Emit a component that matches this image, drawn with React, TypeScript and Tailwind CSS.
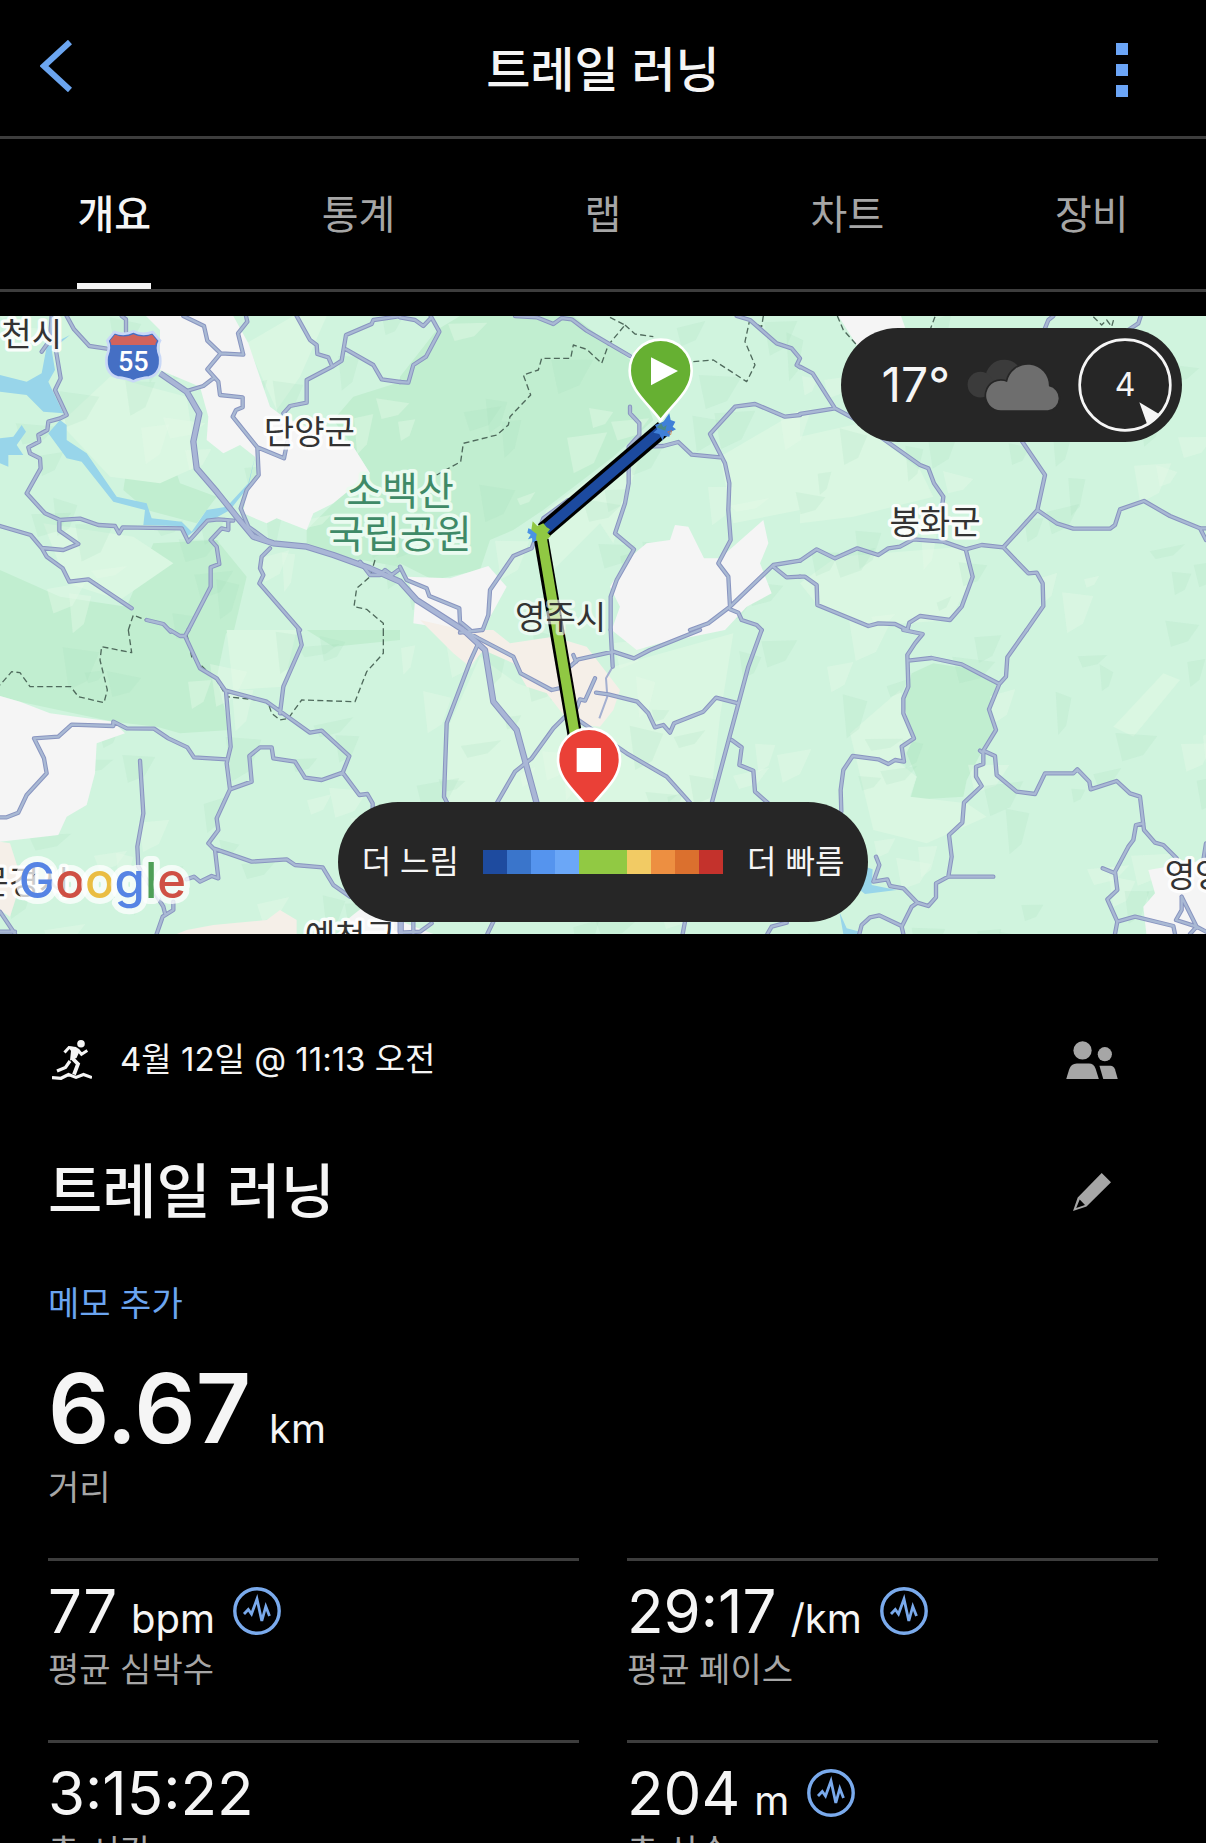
import React, { useState } from 'react';

type Shape = { x: number; y: number; d: string };

const TABS = ['개요', '통계', '랩', '차트', '장비'];

const PACE_COLORS = [
  'bg-[#1e4b9f]',
  'bg-[#3a75cb]',
  'bg-[#5594ee]',
  'bg-[#6ba7f7]',
  'bg-[#91c943]',
  'bg-[#91c943]',
  'bg-[#f2cb64]',
  'bg-[#ed8f41]',
  'bg-[#db702e]',
  'bg-[#c4322c]',
];

const METRICS = [
  { value: '77', unit: 'bpm', label: '평균 심박수', chart: true },
  { value: '29:17', unit: '/km', label: '평균 페이스', chart: true },
  { value: '3:15:22', unit: '', label: '총 시간', chart: false },
  { value: '204', unit: 'm', label: '총 상승', chart: true },
];

// Map layers. Every shape is stored with the origin of its tile.
const FOREST: Shape[] = [
  { x: 0, y: -18, d: 'M0 780L180 860L380 890L460 700L650 690L740 800L700 970H0z' },
  { x: 0, y: 942, d: 'M0 0H680L650 145L690 300L540 310L470 290L340 275L60 215L0 198z' },
  { x: 0, y: -18, d: 'M920 660L1040 540L1110 490L1060 410L1000 330L1060 260L1200 216V770L1000 735L920 700z' },
  { x: 1200, y: -18, d: 'M0 200L110 60L180 18H520L690 150L760 330L640 440L430 600L340 660L270 690L240 780L100 810L0 760z' },
  { x: 2400, y: 942, d: 'M335 130L400 100L500 115L590 165L567 238L588 300L545 365L500 450L490 500L330 510L350 440L320 370L340 325L305 240z' },
  { x: 0, y: -18, d: 'M390 410L500 400L540 520L650 560L590 640L440 600L370 540z' },
  { x: 0, y: 942, d: 'M920 0H1200V30L1000 50z' },
];

const MEADOW: Shape[] = [
  { x: 0, y: -18, d: 'M180 340L330 200L560 260L590 470L480 520L330 500z' },
  { x: 0, y: -18, d: 'M130 640L400 680L520 760L360 870L200 820z' },
  { x: 0, y: 942, d: 'M680 0H890L850 170L700 180z' },
  { x: 0, y: -18, d: 'M740 100L880 18H980L900 200L830 300z' },
  { x: 1200, y: 942, d: 'M350 160L560 230L640 110L1000 10L960 260L930 520H130L150 280L240 80z' },
  { x: 1200, y: -18, d: 'M440 600L740 380L680 560L640 700L600 640L460 780L400 720z' },
  { x: 1200, y: -18, d: 'M960 440L1200 300V600L1000 640z' },
  { x: 2400, y: -18, d: 'M0 820L110 740L490 710L518 800L450 930L205 948L52 885z' },
  { x: 2400, y: -18, d: 'M0 380L180 340L360 480L400 560L160 620L0 640z' },
  { x: 2400, y: 942, d: 'M150 310L300 180L340 330L300 400L350 440L330 500L500 520L560 560L380 640L220 600z' },
  { x: 2400, y: 942, d: 'M940 290L1090 130L1140 150L1000 320z' },
];

const OPEN: Shape[] = [
  { x: 0, y: -18, d: 'M420 0H690L745 100L810 290L850 320L1060 410L1110 490L1000 580L940 610L920 660L830 625L800 640L730 610L740 540L780 500L765 440L720 405L670 430L620 390L625 320L600 230L480 180V60z' },
  { x: 0, y: 942, d: 'M0 198L60 215L150 250L340 275L375 310L290 340L285 430L260 525L200 560L175 615L0 635z' },
  { x: 1200, y: -18, d: 'M630 830L680 750L740 700L810 690L825 645L865 650L912 745H960L1090 630L1105 700L1080 760L1115 850L1040 890L975 960L780 1000L710 1020L635 960L660 890z' },
  { x: 1200, y: -18, d: 'M20 800L150 805L265 768L320 830L260 940L248 970L200 965L40 940L45 870z' },
  { x: 2400, y: -18, d: 'M110 10H300L320 65L170 105z' },
  { x: 2400, y: 942, d: 'M1218 690L1045 720L1065 790L1030 830L1040 920H1218z' },
  { x: 0, y: 942, d: 'M1040 870L1090 830L1300 912V930H1060z' },
];

const TOWN: Shape[] = [
  { x: 1200, y: 942, d: 'M60 -30L190 0L280 0L330 40L460 20L560 50L660 180L640 240L600 290L510 280L440 190L380 170L340 100L250 60L210 110L160 70z' },
  { x: 0, y: 942, d: 'M0 635L30 640L65 750L30 860L0 840z' },
  { x: 0, y: 942, d: 'M510 920L560 900L640 885L800 870L840 840L890 870V920z' },
];

const WATER: Shape[] = [
  { x: 0, y: -18, d: 'M0 195L80 215L125 190L140 110L210 75L155 120L165 180L145 215L190 310L130 305L80 255L0 245z' },
  { x: 0, y: -18, d: 'M145 370L180 330L200 345V390L260 430L350 560L440 580L455 625L545 635L575 665L620 600L680 590L745 520L765 440L745 530L690 600L600 650L560 680L530 648L430 645L435 600L340 575L245 455L200 445z' },
  { x: 0, y: -18, d: 'M0 385L40 380L65 345L78 365L50 405L70 435L25 435V470L0 460z' },
  { x: 2400, y: 942, d: 'M200 712L218 718L215 765L290 780L195 792L180 780z' },
  { x: 2400, y: 942, d: 'M118 845L140 895L180 905V912H130z' },
];

const ROADS: Shape[] = [
  {
    x: 0,
    y: -18,
    d: 'M200 18L222 58L268 108L320 116M365 18L378 28V65M560 243L610 228L640 205M550 18L612 48L622 92L662 130L622 178L655 215L660 255L728 262V292L708 300L698 320L772 412L852 445L862 395M662 130L730 134L714 70L742 35L738 18M772 412L776 495L740 540L722 595L745 650L800 690M890 18L930 90L950 105L952 132L985 142L995 165M850 310L870 288L920 278V210L1000 168L1025 152L1038 75L1115 42L1120 30L1200 18M1038 118L1120 165L1145 208L1200 216M155 18L150 90L125 125M150 90L165 105L182 205L165 240L200 315L180 325L145 335L142 360L115 375L118 395L85 412L90 430L120 445L122 475L80 550L135 610L180 630L240 626L295 645L345 648L357 670L368 652L545 655L565 695L622 632L655 628L700 632M178 630V662L235 702L190 720L125 714L92 675L0 648M125 714L140 740L188 775L208 815L265 808L395 895M440 930L490 942L512 965M685 632V660L665 655L632 690L650 710L658 762L632 772V830L565 960M810 715L785 740L780 775L790 795L778 820L900 960M1080 755L1110 795L1140 795L1155 780L1175 795L1195 780',
  },
  {
    x: 1200,
    y: -18,
    d: 'M0 22L45 30L70 48L92 25M92 18L118 65L78 140L40 165L25 218L0 216M345 18L410 22L460 42L485 24L515 28L560 62L690 138M1010 18L1050 30L1130 100L1175 115L1200 145L1190 165L1200 172M690 290V310L718 340V375L686 410V520L675 580L645 670L702 718L650 810L632 860V960M740 410L790 408L835 396L875 434L960 442M1200 315L1155 320L1065 282L1005 290L930 372L975 460L988 520L985 600L992 690L955 760L985 800L990 890M870 960L925 940L990 890L1120 765L1200 752M1120 770L1160 802L1200 800M990 898L1015 908L1025 930L1070 945L1085 960M0 770L20 810L80 835L88 858L178 895L180 935L210 960M505 570L430 625L395 715L340 738L270 840L265 915L248 960',
  },
  {
    x: 2400,
    y: -18,
    d: 'M0 170L38 190L105 295L0 312M105 295L170 330L360 465L385 475L402 520L430 560L425 600M660 385L735 495L712 600L610 712L545 705L497 718L430 695L340 688L300 710L265 715L235 735L172 715L105 745L50 718L0 752M712 600L770 640L820 656H930L945 645L960 598L1032 573L1110 618L1200 655H1218M1200 655L1218 690M497 718L518 800L485 890L450 930L360 918L328 938L322 960M610 712L685 790L710 788L728 820L730 888L680 960M0 800L15 800L50 825L52 885L205 948L235 940L285 942L322 960M735 55L745 30L760 18M985 60L1015 40L1022 18',
  },
  {
    x: 0,
    y: 942,
    d: 'M510 0L540 18H555L565 0M555 18L600 115L650 145L678 185L692 350L680 400L690 478L650 565L655 600L625 640L645 660L655 745L635 738L600 755L582 740L560 748M678 182L800 215L930 308L965 302L1048 378L1028 428L965 450L915 443L885 395L820 385L815 352L780 352L748 378L755 455L690 478M1028 428L1078 495L1102 492L1118 520V540M895 0L905 45L850 170L840 250M680 388L582 382L562 352L505 325L462 296L380 295L340 275V288L215 284L175 320L102 325L132 385L140 430L80 495L55 548L20 562H0M420 392L430 550L412 650L415 710L490 830L495 850M520 815V840L488 860L470 912M640 655L755 695L860 688L885 705L968 712L1000 765L1050 800M0 845L45 912M0 905H45',
  },
  {
    x: 1200,
    y: 942,
    d: 'M190 0L235 25L340 80L362 130L455 180L500 170M235 40L210 95L140 280L132 500L142 520M180 8L245 0M510 110L535 88L640 65L702 85L750 60L900 0M520 75L528 95M632 0L638 110M588 188L625 193L712 215L745 250L765 292L790 285L810 308L822 280L910 245L948 203L1015 220M1085 0L1045 110L935 520M995 330L1025 352L1018 405L1060 422L1065 485L1105 520M585 145L555 212L540 208L530 235M500 255L460 295L395 385L345 425L290 520M535 270L680 370L800 440L870 518M40 875V910M95 880L60 905L0 908M280 875L262 912M855 875L848 912M1160 878L1115 890L1102 912',
  },
  {
    x: 2400,
    y: 942,
    d: 'M310 0L368 12L345 40L322 75L325 170L310 205V250L342 325L305 350L312 395L285 390L265 402L235 388L158 378L130 420L122 480L124 545M325 92L395 84L485 103L598 162M680 0L622 82L618 140L598 162L567 238L588 300L550 362L585 378L590 435L650 485L705 492L735 430H820L832 418L868 455L872 478L950 453L990 490L1020 500L1032 600L1065 638L1090 645L1130 685M540 362L550 370V402L528 410V440L545 468L492 518L487 578L447 615L455 680L445 740L408 760V802L385 828L352 818L310 775L270 768L262 748L220 755L238 705L228 680M445 740H580M352 818L335 830L305 890L310 912M305 888L238 856L210 862L185 885L178 912M1030 580L1008 585L1000 630L985 650L945 725L952 780L922 808L952 875L945 912M945 730L908 715M952 875L1005 860L1120 888L1125 912M1145 800V840L1128 870L1190 890L1145 800M1190 890L1218 905M1190 890L1170 912M1218 640L1210 690',
  },
];

const HIGHWAYS: Shape[] = [
  { x: 0, y: -18, d: 'M480 190L560 245L598 310L580 395L590 475L650 545L710 620L760 680L820 700L920 710L1000 735L1110 775L1200 815L1250 870L1390 960' },
  { x: 1200, y: 942, d: 'M190 0L255 60L280 215L350 300L410 520' },
  { x: 1200, y: 942, d: 'M2 870V915' },
];

const BORDERS: Shape[] = [
  { x: 0, y: -18, d: 'M385 960L400 915L450 935M1125 750L1110 800L1070 835L1062 890L1100 898L1150 940V960' },
  { x: 0, y: 942, d: 'M385 0L395 68L305 50L300 90L322 180L312 218L235 200L212 170H90L60 128L35 125L0 165M1150 0V70L1100 125L1065 215L905 210L865 265L840 270L815 250L805 220M560 10L575 80L650 150L680 200L800 213' },
  { x: 1200, y: -18, d: 'M630 22L675 45L625 105L605 160L560 118L520 105L512 145H425L415 180L370 195L392 255L330 320L325 345L290 375L190 400L182 455L110 495M675 45L705 72L760 80M880 155L940 150L1040 215L1065 165L1035 95L1048 35M1090 18L1085 50L1050 35' },
  { x: 2400, y: -18, d: 'M112 18L130 60L170 105M405 20L390 60M880 20L905 45L920 30L935 50L942 25' },
];

// Small low-contrast facets that give the terrain its relief.
const FACETS = Array.from({ length: 230 }, (_, i) => {
  const x = (i * 733) % 3618;
  const y = (i * 419 + ((i * i * 37) % 211)) % 1854;
  const w = 40 + ((i * 53) % 90);
  const h = 25 + ((i * 31) % 70);
  return `M${x} ${y}l${w} ${((i * 17) % 50) - 25}l${-w / 3} ${h}l${-w / 2} ${h / 3}z`;
});

const Layer: React.FC<{ shapes: Shape[] }> = ({ shapes }) => (
  <>
    {shapes.map((s, i) => (
      <path key={i} transform={`translate(${s.x} ${s.y})`} d={s.d} />
    ))}
  </>
);

const TrailMap: React.FC = () => (
  <svg
    viewBox="0 0 3618 1854"
    preserveAspectRatio="xMidYMid slice"
    className="block h-full w-full font-['Roboto','Noto_Sans_CJK_KR',sans-serif]"
    role="img"
    aria-label="지도"
  >
    <rect width="3618" height="1854" fill="#d0f4de" />
    <g fill="#c1eed0"><Layer shapes={FOREST} /></g>
    <g fill="#daf7e2"><Layer shapes={MEADOW} /></g>
    <g>
      {FACETS.map((d, i) => (
        <path key={i} d={d} fill={i % 3 === 0 ? '#e6fbe9' : '#9fd9b6'} opacity={i % 3 === 0 ? 0.4 : 0.17} />
      ))}
    </g>
    <g fill="#f5f5f5"><Layer shapes={OPEN} /></g>
    <g fill="#f5efe8"><Layer shapes={TOWN} /></g>
    <g fill="#98d5ea"><Layer shapes={WATER} /></g>

    <g fill="none" strokeLinejoin="round">
      <g stroke="#4f6a5c" strokeWidth="4" strokeDasharray="18 10"><Layer shapes={BORDERS} /></g>
      <path d="M1838 1052L1818 1087L1822 1142L1798 1207" stroke="#a3afd0" strokeWidth="6" />
      <g stroke="#8995c0" strokeWidth="13" strokeLinecap="round"><Layer shapes={ROADS} /></g>
      <g stroke="#8995c0" strokeWidth="19"><Layer shapes={HIGHWAYS} /></g>
      <g stroke="#a9b9d4" strokeWidth="7" strokeLinecap="round"><Layer shapes={ROADS} /></g>
      <g stroke="#a9b6d6" strokeWidth="13"><Layer shapes={HIGHWAYS} /></g>
    </g>

    {/* Route */}
    <g transform="translate(1200 -18)" fill="none">
      <path d="M790 355L430 662" stroke="#000" strokeWidth="50" />
      <path d="M424 690L534 1330" stroke="#000" strokeWidth="44" />
      <path d="M800 346L425 668" stroke="#1c4a9f" strokeWidth="30" />
      <path d="M765 345L790 335L808 310L812 330L826 335L818 350L828 358L812 366L808 380L792 378L788 392L778 372L760 368L772 358z" fill="#3f80d8" />
      <path d="M770 352L784 340L790 352L800 345L796 362L784 358z" fill="#4a8a8a" />
      <path d="M803 366L815 362L812 374z" stroke="#d0703c" strokeWidth="2" />
      <path d="M385 655L398 660L405 650L420 665L410 690L398 698L396 684L384 688L392 674L382 668z" fill="#4a93e4" />
      <path d="M424 676L534 1330" stroke="#90c843" strokeWidth="30" />
      <path d="M398 634L412 648L430 640L440 652L450 658L442 668L452 678L440 690H408L410 672L394 660z" fill="#90c843" />
    </g>

    {/* Interstate shield */}
    <g transform="translate(0 -18)">
      <path d="M343 66Q372 78 400 64Q428 78 458 66L480 92Q468 112 480 140Q486 190 448 202Q420 204 400 214Q380 204 352 202Q314 190 320 140Q332 112 322 92z" fill="#456fc4" stroke="#c9d8f7" strokeWidth="8" />
      <path d="M345 74Q374 86 400 73Q427 86 456 74L471 92Q466 98 466 105H334Q334 98 330 92z" fill="#d2635c" />
      <text x="400" y="183" textAnchor="middle" fontSize="81" fontWeight="500" fill="#fff">55</text>
    </g>

    {/* Place names */}
    <g fontSize="99" fill="#333" stroke="#fff" strokeWidth="20" strokeLinejoin="round" paintOrder="stroke" strokeOpacity="0.9">
      <text x="95" y="90" textAnchor="middle">천시</text>
      <text x="928" y="383" textAnchor="middle">단양군</text>
      <text x="2805" y="654" textAnchor="middle">봉화군</text>
      <text x="1682" y="938" textAnchor="middle" strokeOpacity="0.6">영주시</text>
      <text x="3494" y="1712">영양군</text>
      <text x="914" y="1896">예천군</text>
      <text x="-65" y="1735">문경시</text>
    </g>
    <g fontSize="117" fill="#3f8a67" stroke="#eafbf0" strokeWidth="22" strokeLinejoin="round" paintOrder="stroke" textAnchor="middle">
      <text x="1200" y="568">소백산</text>
      <text x="1200" y="696">국립공원</text>
    </g>

    <text
      x="56"
      y="1746"
      className="font-['Inter',sans-serif]"
      fontSize="147"
      fontWeight="500"
      stroke="#fff"
      strokeWidth="36"
      strokeLinejoin="round"
      strokeOpacity="0.75"
      paintOrder="stroke"
    >
      <tspan fill="#5684e4">G</tspan>
      <tspan fill="#cf5044">o</tspan>
      <tspan fill="#eabd42">o</tspan>
      <tspan fill="#5684e4">g</tspan>
      <tspan fill="#4f9f57">l</tspan>
      <tspan fill="#cf5044">e</tspan>
    </text>

    {/* Start and finish pins */}
    <g transform="translate(1982 -18)" stroke="#fff" strokeWidth="8">
      <path d="M0 89C-52 89 -93 130 -93 182C-93 240 -42 276 0 331C42 276 93 240 93 182C93 130 52 89 0 89z" fill="#66b032" />
      <path d="M-29 142V226L52 183z" fill="#fff" stroke="none" />
    </g>
    <g transform="translate(1767 1149)" stroke="#fff" strokeWidth="8">
      <path d="M0 89C-52 89 -93 130 -93 182C-93 240 -42 276 0 331C42 276 93 240 93 182C93 130 52 89 0 89z" fill="#ea4037" />
      <rect x="-37" y="147" width="73" height="72" fill="#fff" stroke="none" />
    </g>
  </svg>
);

const CloudIcon: React.FC = () => (
  <svg viewBox="500 146 284 158" className="h-[52px] w-[94px]" aria-hidden="true">
    <g fill="#3b3b3b">
      <circle cx="612" cy="205" r="57" />
      <circle cx="540" cy="224" r="39" />
    </g>
    <path
      d="M603 302A45 45 0 1 1 621 216A64 64 0 0 1 748 229A37 37 0 0 1 745 302z"
      fill="#6e6e6e"
      stroke="#262626"
      strokeWidth="10"
      paintOrder="stroke"
    />
  </svg>
);

const RunnerIcon: React.FC = () => (
  <svg viewBox="0 0 40 40" className="h-10 w-10" fill="none" stroke="#f5f5f5" aria-hidden="true">
    <circle cx="29" cy="3.8" r="3.8" fill="#f5f5f5" stroke="none" />
    <path d="M16 6.2L25 7.5L28 10.5L24.5 18L18 20.5L19 11z" fill="#f5f5f5" stroke="none" />
    <path d="M12.5 12.5L17 7.5L24 8.6" strokeWidth="3" />
    <path d="M25.5 9.5L29.5 14.2L35.3 10.6" strokeWidth="3" />
    <path d="M20 18L26 24L22 34.5" strokeWidth="3.8" />
    <path d="M18 21L13.5 27.5L5 31" strokeWidth="3.2" />
    <path d="M0 37.6L9 38.3L16.5 34.6L24 37.4L31.5 34.4L40 37.6" strokeWidth="3.2" />
  </svg>
);

const PeopleIcon: React.FC = () => (
  <svg viewBox="110 125 154 115" className="w-[52px]" fill="#a6a6a6" aria-hidden="true">
    <circle cx="159" cy="153" r="27" />
    <circle cx="225" cy="164" r="21" />
    <path d="M110 240L119 210Q125 192 142 192H178Q192 192 198 208L208 240z" />
    <path d="M209 198H242Q251 198 255 209L264 240H221z" />
  </svg>
);

const PencilIcon: React.FC = () => (
  <svg viewBox="0 0 38 38" className="h-[38px] w-[38px]" fill="#a6a6a6" aria-hidden="true">
    <path d="M28.7 0L38 9.3L13.5 33.5L0 38L4.7 24.5zM6.7 26.5L3.2 35L12 32z" fillRule="evenodd" />
  </svg>
);

const ChartIcon: React.FC = () => (
  <svg viewBox="0 0 48 48" className="h-12 w-12" fill="none" stroke="#7aaaec" aria-hidden="true">
    <circle cx="24" cy="24" r="22.2" strokeWidth="3.4" />
    <path d="M11 27L15.3 22.5L18.5 27L24 12L28.8 34L32.8 19.5L36.5 29" strokeWidth="2.8" />
  </svg>
);

export default function App() {
  const [active, setActive] = useState('개요');

  return (
    <div
      lang="ko"
      className="h-screen overflow-y-auto bg-black font-['Inter','Noto_Sans_CJK_KR',sans-serif] text-[#f5f5f5] [scrollbar-width:none]"
    >
      {/* Header */}
      <header className="grid h-[139px] grid-cols-[1fr_auto_1fr] items-center border-b-[3px] border-[#3d3d3d] pt-1">
        <button type="button" aria-label="뒤로" className="justify-self-start pb-2 pl-10">
          <svg viewBox="0 0 32 52" className="h-[52px] w-8" fill="none" stroke="#6ba5f0" strokeWidth="6">
            <path d="M30 2L4 26L30 50" />
          </svg>
        </button>
        <h1 className="text-5xl font-medium">트레일 러닝</h1>
        <button type="button" aria-label="더 보기" className="mr-[78px] flex flex-col gap-[9px] justify-self-end">
          <span className="h-3 w-3 bg-[#6ba5f7]" />
          <span className="h-3 w-3 bg-[#6ba5f7]" />
          <span className="h-3 w-3 bg-[#6ba5f7]" />
        </button>
      </header>

      {/* Tabs */}
      <nav className="overflow-hidden border-b-[3px] border-[#3d3d3d]">
        <div role="tablist" className="-mx-2 grid h-[150px] grid-cols-5 justify-items-center">
          {TABS.map((tab) => (
            <button
              key={tab}
              type="button"
              role="tab"
              aria-selected={active === tab}
              onClick={() => setActive(tab)}
              className={
                active === tab
                  ? 'border-b-[6px] border-[#f5f5f5] pt-2 text-[40px] font-medium'
                  : 'border-b-[6px] border-transparent pt-2 text-[40px] text-[#a6a6a6]'
              }
            >
              {tab}
            </button>
          ))}
        </div>
      </nav>

      {/* Map */}
      <section className="relative mt-6 h-[618px] overflow-hidden">
        <TrailMap />
        <div className="absolute top-3 right-6 flex h-[114px] items-center gap-[17px] rounded-full bg-[#262626] pr-2.5 pl-10">
          <span className="text-5xl">17°</span>
          <CloudIcon />
          <div className="relative flex h-[94px] w-[94px] items-center justify-center">
            <svg viewBox="-141 -141 282 282" className="absolute inset-0" aria-hidden="true">
              <circle r="136" fill="none" stroke="#f5f5f5" strokeWidth="8" />
              <path d="M43 52L107 90L68 122z" fill="#f5f5f5" />
            </svg>
            <span className="text-[32px]">4</span>
          </div>
        </div>
        <div className="absolute inset-x-0 bottom-3 flex justify-center">
          <div className="flex h-[120px] items-center gap-6 rounded-full bg-[#262626] px-6 text-[32px]">
            <span>더 느림</span>
            <div className="flex">
              {PACE_COLORS.map((color, i) => (
                <span key={i} className={`h-6 w-6 ${color}`} />
              ))}
            </div>
            <span>더 빠름</span>
          </div>
        </div>
      </section>

      {/* Summary */}
      <main className="px-12 pt-[78px]">
        <div className="flex h-24 items-center justify-between">
          <div className="flex items-center gap-6">
            <span className="flex w-12 justify-center">
              <RunnerIcon />
            </span>
            <span className="text-[33px]">4월 12일 @ 11:13 오전</span>
          </div>
          <button type="button" aria-label="공개 범위" className="mr-10">
            <PeopleIcon />
          </button>
        </div>

        <div className="mt-9 flex h-24 items-center justify-between">
          <h2 className="text-[59px] font-medium">트레일 러닝</h2>
          <button type="button" aria-label="이름 편집" className="mr-10 flex w-[52px] justify-center">
            <PencilIcon />
          </button>
        </div>

        <a href="#memo" className="mt-11 block text-[34px] leading-10 text-[#6ba5f0]">
          메모 추가
        </a>

        <div className="mt-9">
          <p className="flex h-24 items-baseline gap-[18px]">
            <span className="text-8xl leading-[96px] font-semibold">6.67</span>
            <span className="text-[40px] leading-10">km</span>
          </p>
          <p className="mt-3 text-[34px] leading-10 text-[#a6a6a6]">거리</p>
        </div>

        <dl className="mt-[50px] grid grid-cols-2 gap-x-12">
          {METRICS.map((m) => (
            <div key={m.label} className="flex flex-col-reverse border-t-[3px] border-[#3d3d3d] pt-5 pb-[50px]">
              <dt className="mt-[9px] text-[34px] leading-10 text-[#a6a6a6]">{m.label}</dt>
              <dd className="flex h-[60px] items-center gap-[18px]">
                <span className="flex items-baseline gap-3.5">
                  <span className="text-6xl leading-[60px]">{m.value}</span>
                  {m.unit && <span className="text-[40px] leading-10">{m.unit}</span>}
                </span>
                {m.chart && (
                  <button type="button" aria-label={`${m.label} 차트`}>
                    <ChartIcon />
                  </button>
                )}
              </dd>
            </div>
          ))}
        </dl>
      </main>
    </div>
  );
}
